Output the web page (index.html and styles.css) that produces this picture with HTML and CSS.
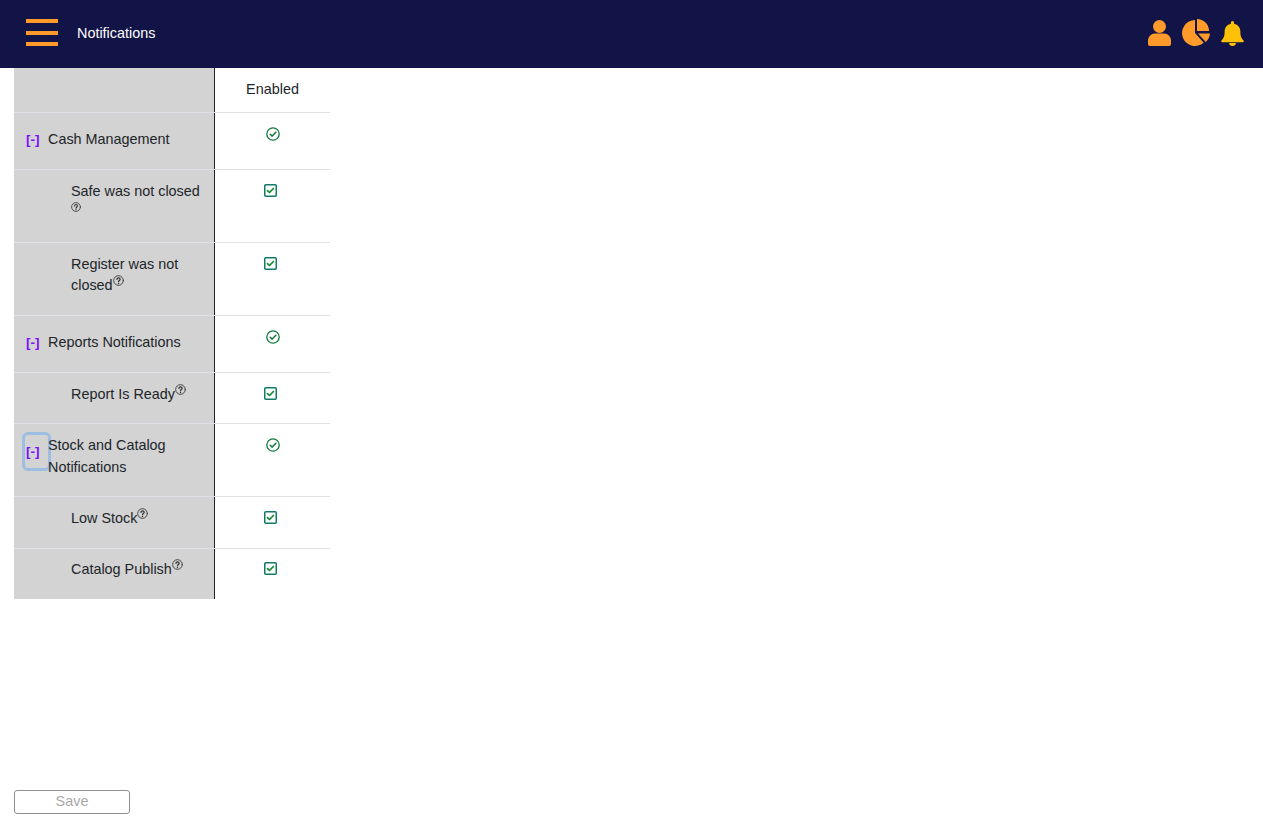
FILE: index.html
```html
<!DOCTYPE html>
<html lang="en">
<head>
<meta charset="utf-8">
<title>Notifications</title>
<link rel="stylesheet" href="styles.css">
</head>
<body>
<header class="topbar">
  <button class="menu" aria-label="Menu"><span></span><span></span><span></span></button>
  <div class="title">Notifications</div>
  <div class="top-icons">
    <svg class="ic-user" viewBox="0 0 23 26"><circle cx="11.500" cy="6.500" r="6.500"/><path d="M2 26a2 2 0 0 1-2-2v-3a7 7 0 0 1 7-7.500h9a7 7 0 0 1 7 7.500v3a2 2 0 0 1-2 2z"/></svg>
    <svg class="ic-pie" viewBox="0 0 28 27"><path d="M13 1v13l8.700 9.700A13 13 0 1 1 13 1z"/><path d="M15 0a12 12 0 0 1 12 12H15z"/><path d="M16 14.500h12a13 13 0 0 1-4.300 8.500z"/></svg>
    <svg class="ic-bell" viewBox="0 0 24 26"><path d="M12 0a1.700 1.700 0 0 1 1.700 1.700v1.200c3.900.8 6.500 4 6.500 8 0 5.500 1.300 7.200 3.300 9.300.8.900.3 1.800-.7 1.800H1.200c-1 0-1.500-.9-.7-1.800 2-2.100 3.300-3.800 3.300-9.300 0-4 2.600-7.200 6.500-8V1.700A1.700 1.700 0 0 1 12 0z"/><path d="M8.500 23h7a3.500 3 0 0 1-7 0z"/></svg>
  </div>
</header>

<main class="table">
  <div class="row h-head">
    <div class="label"></div>
    <div class="value head">Enabled</div>
  </div>

  <div class="row h-group">
    <div class="label group"><a class="toggle">[-]</a><span class="group-name">Cash Management</span></div>
    <div class="value"><svg class="circle" viewBox="0 0 14 14"><use href="#circle-check"/></svg></div>
  </div>
  <div class="row h-tall">
    <div class="label item">Safe was not closed <sup class="help"><svg viewBox="0 0 10 10"><use href="#help"/></svg></sup></div>
    <div class="value"><svg class="box" viewBox="0 0 13 13"><use href="#box-check"/></svg></div>
  </div>
  <div class="row h-tall">
    <div class="label item">Register was not closed<sup class="help big"><svg viewBox="0 0 10 10"><use href="#help"/></svg></sup></div>
    <div class="value"><svg class="box" viewBox="0 0 13 13"><use href="#box-check"/></svg></div>
  </div>

  <div class="row h-group">
    <div class="label group"><a class="toggle">[-]</a><span class="group-name">Reports Notifications</span></div>
    <div class="value"><svg class="circle" viewBox="0 0 14 14"><use href="#circle-check"/></svg></div>
  </div>
  <div class="row h-short">
    <div class="label item">Report Is Ready<sup class="help big"><svg viewBox="0 0 10 10"><use href="#help"/></svg></sup></div>
    <div class="value"><svg class="box" viewBox="0 0 13 13"><use href="#box-check"/></svg></div>
  </div>

  <div class="row h-tall">
    <div class="label group two"><a class="toggle focus">[-]</a><span class="group-name">Stock and Catalog Notifications</span></div>
    <div class="value"><svg class="circle" viewBox="0 0 14 14"><use href="#circle-check"/></svg></div>
  </div>
  <div class="row h-short2">
    <div class="label item">Low Stock<sup class="help big"><svg viewBox="0 0 10 10"><use href="#help"/></svg></sup></div>
    <div class="value"><svg class="box" viewBox="0 0 13 13"><use href="#box-check"/></svg></div>
  </div>
  <div class="row h-short2 last">
    <div class="label item">Catalog Publish<sup class="help big"><svg viewBox="0 0 10 10"><use href="#help"/></svg></sup></div>
    <div class="value"><svg class="box" viewBox="0 0 13 13"><use href="#box-check"/></svg></div>
  </div>
</main>

<footer class="footer"><button class="save" disabled>Save</button></footer>

<svg class="defs" width="0" height="0" aria-hidden="true">
  <defs>
    <g id="circle-check" fill="none" stroke="#0f7a3c" stroke-linecap="round" stroke-linejoin="round">
      <circle cx="7" cy="7" r="6.200" stroke-width="1.300"/>
      <path d="M4.200 7.200 6.200 9.100l3.700-3.900" stroke-width="1.500"/>
    </g>
    <g id="box-check" fill="none" stroke-linecap="round" stroke-linejoin="round">
      <rect x=".75" y=".75" width="11.500" height="11.500" rx="1" stroke="#0f7a6a" stroke-width="1.500"/>
      <path d="M3.500 6.600 5.500 8.500 9.400 4.500" stroke="#0f8a2c" stroke-width="1.700"/>
    </g>
    <g id="help" fill="none" stroke-linecap="round">
      <circle cx="5" cy="5" r="4.400" stroke="#444" stroke-width=".9"/>
      <path d="M3.600 4c0-2 2.900-1.800 2.900-.1 0 1.100-1.500 1.200-1.500 2.300" stroke="#333" stroke-width="1.100"/>
      <path d="M5 7.600v.1" stroke="#333" stroke-width="1.200"/>
    </g>
  </defs>
</svg>
</body>
</html>
```

FILE: styles.css
```css
*, *::before { box-sizing: border-box; }

html, body { height: 100%; }

body {
  margin: 0;
  height: 821px;
  overflow: hidden;
  display: flex;
  flex-direction: column;
  background: #fff;
  font-family: "Liberation Sans", Arial, sans-serif;
  font-size: 14.4px;
  color: #212529;
}

.topbar {
  flex: none;
  height: 68px;
  display: flex;
  align-items: center;
  background: #121346;
  padding: 0 19px 0 26px;
}

.menu {
  width: 32px;
  height: 27px;
  margin-bottom: 3px;
  padding: 0;
  border: 0;
  background: none;
  display: flex;
  flex-direction: column;
  justify-content: space-between;
}

.menu span {
  display: block;
  height: 4px;
  background: #ff9a2b;
}

.title {
  margin: 0 0 3px 19px;
  color: #fff;
  font-size: 14.4px;
}

.top-icons {
  margin: 0 0 3px auto;
  display: flex;
  align-items: center;
  gap: 11px;
}

.top-icons svg { display: block; }
.ic-user { width: 23px; height: 26px; fill: #ff9a2b; }
.ic-pie { width: 28px; height: 27px; fill: #ff9a2b; }
.ic-bell { width: 23px; height: 25px; fill: #ffc107; align-self: flex-end; }

.table {
  flex: none;
  width: 316px;
  margin-left: 14px;
}

.row {
  display: flex;
  border-bottom: 1px solid #dee2e6;
}

.row.last { border-bottom: 0; }

.h-head { height: 45px; }
.h-group { height: 57px; }
.h-tall { height: 73px; }
.h-short { height: 51px; }
.h-short2 { height: 52px; }
.h-short2.last { height: 50px; }

.label {
  width: 200px;
  flex: none;
  background: #d3d3d3;
}

.group {
  display: flex;
  align-items: flex-start;
  padding: 15px 8px 0 12px;
  line-height: 22px;
  height: 100%;
}

.group.two { padding-top: 10px; }

.group-name {
  position: relative;
  z-index: 1;
}

.toggle {
  flex: none;
  width: 22px;
  margin-top: 4px;
  color: #7a10ff;
  font-weight: 700;
  font-size: 13.5px;
  line-height: 16px;
}

.toggle.focus {
  position: relative;
  margin-top: 10px;
}

.focus::before {
  content: "";
  position: absolute;
  left: -4px;
  top: -12px;
  width: 29px;
  height: 39px;
  border: 3px solid #9dbde2;
  border-radius: 6px;
}

.item {
  padding: 11px 8px 0 57px;
  line-height: 21px;
}

.last .item { padding-top: 10px; }

.help {
  display: inline-block;
  line-height: 0;
  vertical-align: baseline;
  position: relative;
  top: -5px;
}

.help svg {
  width: 10px;
  height: 10px;
  display: inline-block;
}

.help.big svg { width: 11px; height: 11px; }
.help.big { top: -4.5px; }

.value {
  flex: 1;
  border-left: 1px solid #212529;
  text-align: center;
  padding-top: 13px;
  line-height: 14px;
  background: #fff;
}

.value.head {
  font-size: 14.4px;
  padding-top: 14px;
}

.value svg { display: block; }
.circle { width: 14px; height: 14px; margin: 1px auto 0; }
.box { width: 13px; height: 13px; margin: 1px 0 0 49px; }
.last .box { margin-top: 0; }

.footer {
  margin-top: auto;
  padding: 0 0 7px 14px;
}

.save {
  display: block;
  width: 116px;
  height: 24px;
  padding: 0 0 2px;
  border: 1px solid #8f8f8f;
  border-radius: 3px;
  background: #fff;
  color: #a9a9a9;
  font-family: inherit;
  font-size: 14.4px;
}

.defs { position: absolute; }
```
